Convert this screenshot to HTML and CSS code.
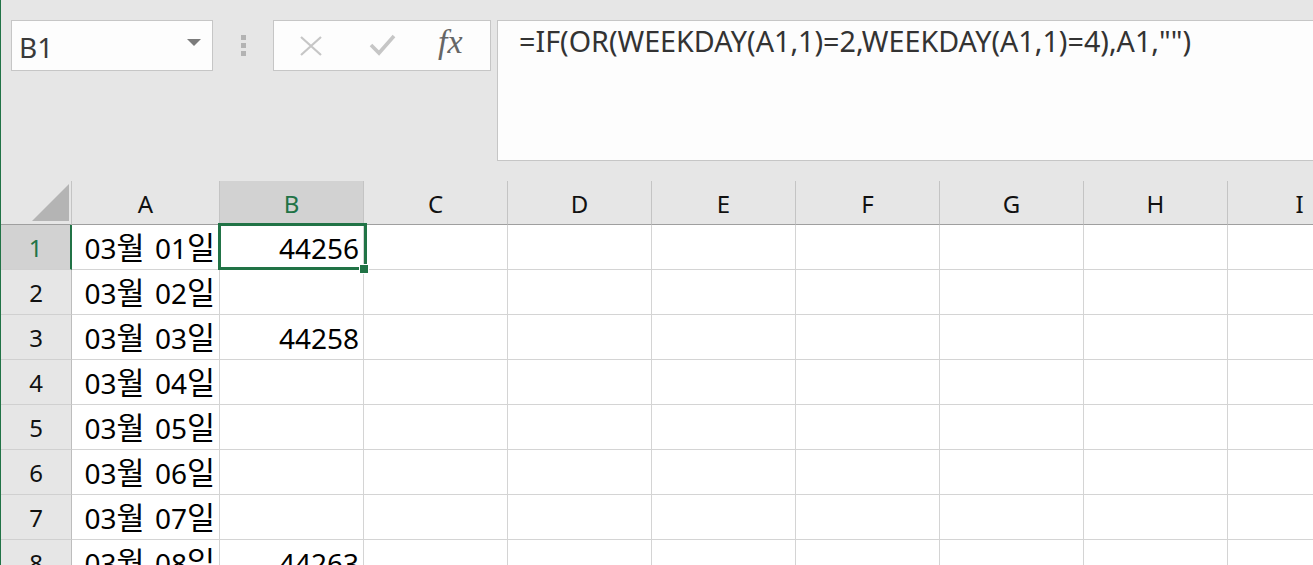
FILE: index.html
```html
<!DOCTYPE html>
<html lang="ko">
<head>
<meta charset="utf-8">
<title>Excel</title>
<link rel="stylesheet" href="styles.css">
</head>
<body>
<div class="app">
  <div class="toolbar">
    <div class="namebox">
      <span class="ref">B1</span>
      <svg class="caret" width="14" height="7" viewBox="0 0 14 7"><path d="M0 0 H14 L7 7 Z" fill="#7b7b7b"/></svg>
    </div>
    <div class="grip"><i></i><i></i><i></i></div>
    <div class="fbtns">
      <svg class="btn-x" width="24" height="20" viewBox="0 0 24 20"><path d="M2 1 L22 19 M22 1 L2 19" stroke="#c6c6c6" stroke-width="2.2" fill="none"/></svg>
      <svg class="btn-ok" width="27" height="22" viewBox="0 0 27 22"><path d="M2 11 L10 19 L25 2" stroke="#c6c6c6" stroke-width="3.6" fill="none"/></svg>
      <span class="fx">fx</span>
    </div>
    <div class="formula">=IF(OR(WEEKDAY(A1,1)=2,WEEKDAY(A1,1)=4),A1,"")</div>
  </div>
  <div class="sheet">
    <div class="corner"><span class="tri"></span></div>
    <div class="ch">A</div>
    <div class="ch sel">B</div>
    <div class="ch">C</div>
    <div class="ch">D</div>
    <div class="ch">E</div>
    <div class="ch">F</div>
    <div class="ch">G</div>
    <div class="ch">H</div>
    <div class="ch">I</div>

    <div class="rh sel">1</div><div class="c">03<span class="k">월</span> 01<span class="k">일</span></div><div class="c">44256</div><div class="c"></div><div class="c"></div><div class="c"></div><div class="c"></div><div class="c"></div><div class="c"></div><div class="c"></div>
    <div class="rh">2</div><div class="c">03<span class="k">월</span> 02<span class="k">일</span></div><div class="c"></div><div class="c"></div><div class="c"></div><div class="c"></div><div class="c"></div><div class="c"></div><div class="c"></div><div class="c"></div>
    <div class="rh">3</div><div class="c">03<span class="k">월</span> 03<span class="k">일</span></div><div class="c">44258</div><div class="c"></div><div class="c"></div><div class="c"></div><div class="c"></div><div class="c"></div><div class="c"></div><div class="c"></div>
    <div class="rh">4</div><div class="c">03<span class="k">월</span> 04<span class="k">일</span></div><div class="c"></div><div class="c"></div><div class="c"></div><div class="c"></div><div class="c"></div><div class="c"></div><div class="c"></div><div class="c"></div>
    <div class="rh">5</div><div class="c">03<span class="k">월</span> 05<span class="k">일</span></div><div class="c"></div><div class="c"></div><div class="c"></div><div class="c"></div><div class="c"></div><div class="c"></div><div class="c"></div><div class="c"></div>
    <div class="rh">6</div><div class="c">03<span class="k">월</span> 06<span class="k">일</span></div><div class="c"></div><div class="c"></div><div class="c"></div><div class="c"></div><div class="c"></div><div class="c"></div><div class="c"></div><div class="c"></div>
    <div class="rh">7</div><div class="c">03<span class="k">월</span> 07<span class="k">일</span></div><div class="c"></div><div class="c"></div><div class="c"></div><div class="c"></div><div class="c"></div><div class="c"></div><div class="c"></div><div class="c"></div>
    <div class="rh">8</div><div class="c">03<span class="k">월</span> 08<span class="k">일</span></div><div class="c">44263</div><div class="c"></div><div class="c"></div><div class="c"></div><div class="c"></div><div class="c"></div><div class="c"></div><div class="c"></div>

    <div class="selection"><span class="handle"></span></div>
  </div>
</div>
</body>
</html>
```

FILE: styles.css
```css
* { box-sizing: border-box; }
html, body { margin: 0; padding: 0; }
body {
  width: 1313px;
  height: 565px;
  overflow: hidden;
  background: #e6e6e6;
  font-family: "Noto Sans", "Noto Sans CJK KR", sans-serif;
}
.app {
  height: 565px;
  border-left: 1px solid #217346;
  overflow: hidden;
}
.toolbar {
  height: 181px;
  display: flex;
  align-items: flex-start;
  padding: 20px 0 0 10px;
}
.namebox {
  width: 202px;
  height: 51px;
  background: #fdfdfd;
  border: 1px solid #c6c6c6;
  display: flex;
  align-items: center;
  justify-content: space-between;
  padding: 0 11px 0 7px;
}
.ref {
  font-size: 28px;
  color: #3a3a3a;
  line-height: 1;
  margin-top: 2px;
}
.caret { margin-top: -6px; }
.grip {
  width: 60px;
  height: 51px;
  display: flex;
  flex-direction: column;
  align-items: center;
  justify-content: center;
  gap: 3px;
}
.grip i {
  display: block;
  width: 5px;
  height: 5px;
  background: #b3b3b3;
}
.fbtns {
  width: 218px;
  height: 51px;
  background: #fdfdfd;
  border: 1px solid #c6c6c6;
  display: flex;
  align-items: center;
  padding-left: 25px;
}
.btn-x { margin-right: 46px; }
.btn-ok { margin-right: 42px; margin-top: -2px; }
.fx {
  font-family: "Liberation Serif", serif;
  font-style: italic;
  font-size: 34px;
  color: #666;
  margin-top: -7px;
}
.formula {
  margin-left: 6px;
  flex: 1;
  height: 141px;
  background: #fdfdfd;
  border: 1px solid #c6c6c6;
  border-right: none;
  padding: 0 0 0 21px;
  font-size: 28.7px;
  color: #333;
  white-space: nowrap;
}
.sheet {
  position: relative;
  display: grid;
  grid-template-columns: 71px 148px repeat(8, 144px);
  grid-template-rows: 44px repeat(8, 45px);
  width: 1371px;
}
.corner {
  position: relative;
  border-right: 1px solid #c4c4c4;
  border-bottom: 1px solid #9f9f9f;
}
.tri {
  position: absolute;
  right: 2px;
  bottom: 3px;
  width: 0;
  height: 0;
  border-left: 37px solid transparent;
  border-bottom: 37px solid #b4b4b4;
}
.ch {
  display: flex;
  align-items: center;
  justify-content: center;
  font-size: 24px;
  color: #111;
  border-right: 1px solid #c4c4c4;
  border-bottom: 1px solid #9f9f9f;
  padding-top: 1px;
}
.ch.sel {
  background: #d2d2d2;
  color: #217346;
}
.rh {
  display: flex;
  align-items: center;
  justify-content: center;
  font-size: 24px;
  color: #111;
  border-right: 1px solid #bdbdbd;
  border-bottom: 1px solid #d0d0d0;
}
.rh.sel {
  background: #d2d2d2;
  color: #217346;
  border-right: 2px solid #217346;
}
.c {
  background: #fff;
  border-right: 1px solid #d4d4d4;
  border-bottom: 1px solid #d4d4d4;
  display: flex;
  align-items: center;
  justify-content: flex-end;
  padding: 1px 4px 0 0;
  font-size: 28px;
  line-height: 1;
  word-spacing: 3px;
  color: #000;
  white-space: pre;
}
.k {
  font-size: 30.5px;
}
.selection {
  position: absolute;
  left: 217px;
  top: 42px;
  width: 149px;
  height: 47px;
  border: 3px solid #217346;
}
.handle {
  position: absolute;
  left: 139px;
  top: 39px;
  width: 8px;
  height: 8px;
  background: #217346;
  box-shadow: 0 0 0 1px #fff;
}
```
